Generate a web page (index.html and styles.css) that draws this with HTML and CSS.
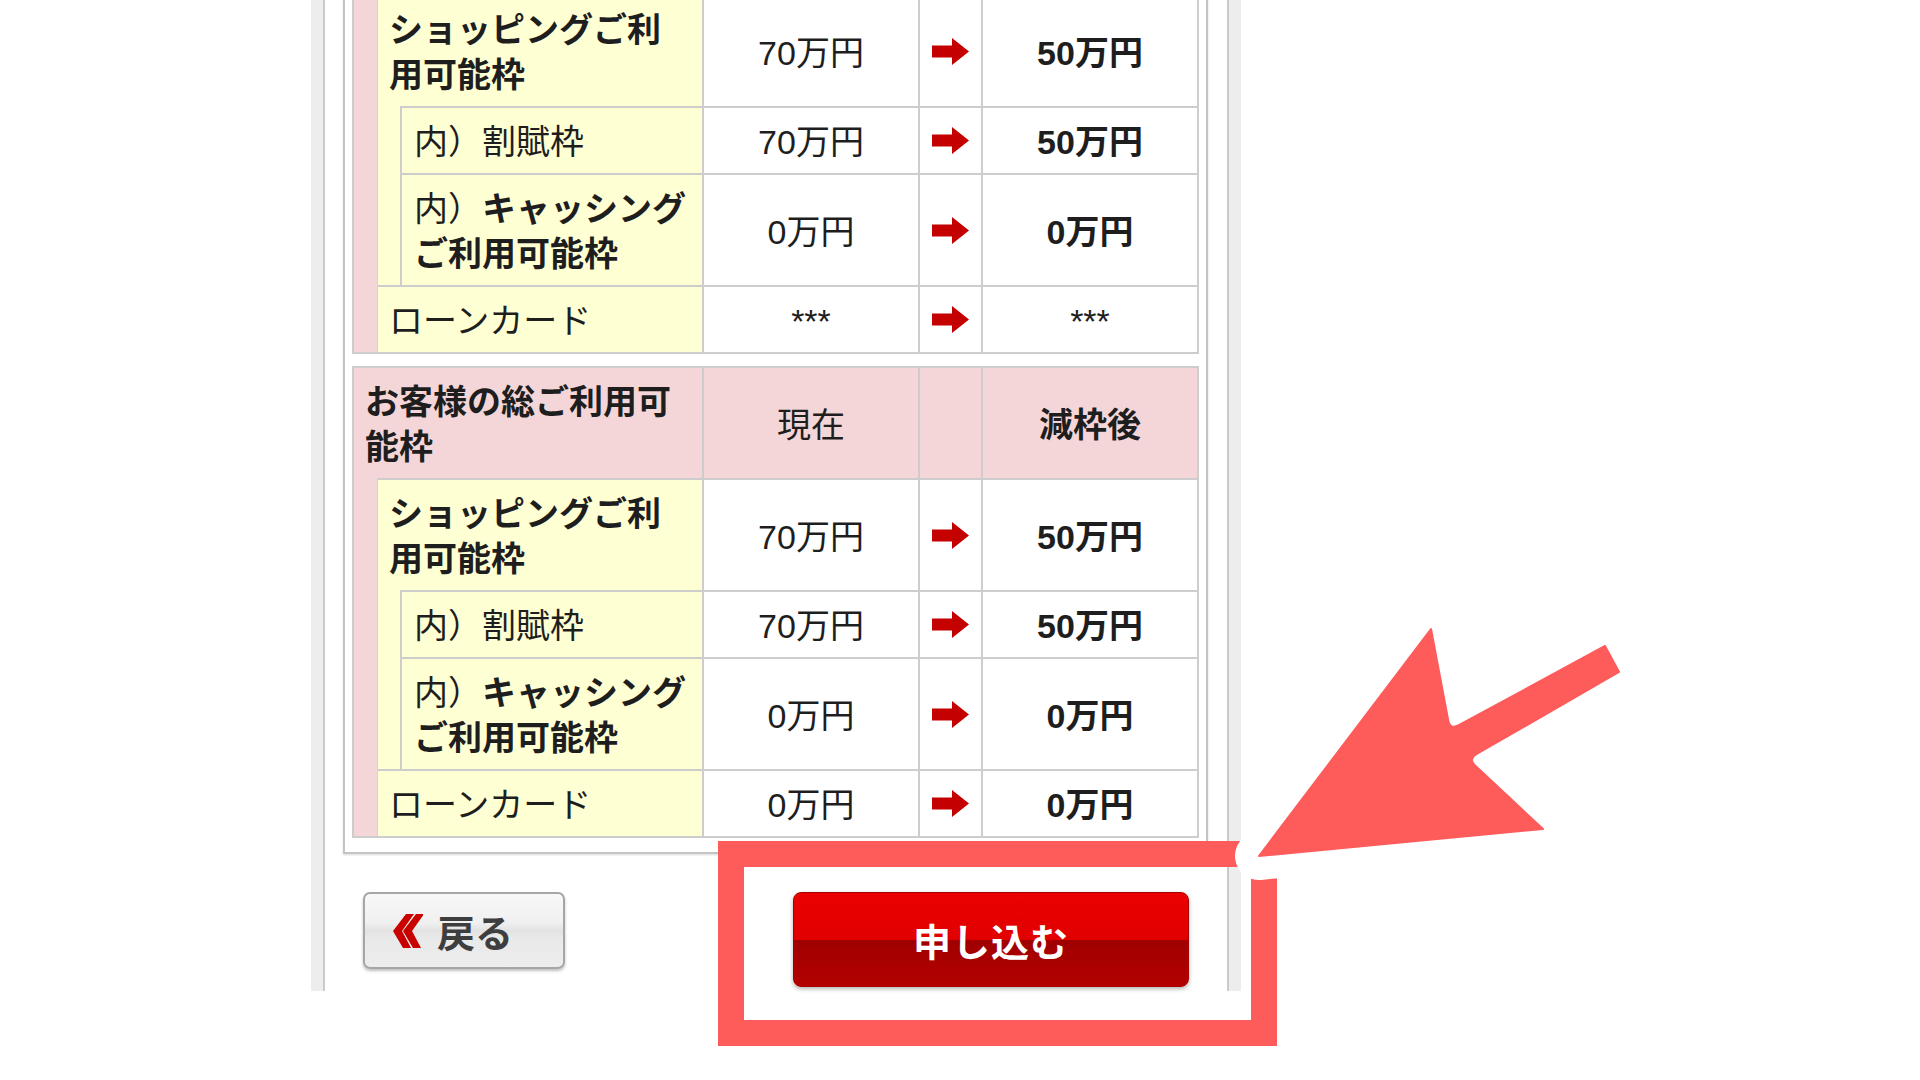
FILE: index.html
```html
<!DOCTYPE html>
<html lang="ja">
<head>
<meta charset="utf-8">
<title>減枠のお申し込み</title>
<link rel="stylesheet" href="styles.css">
</head>
<body>
<div class="frame">
  <div class="box">
    <div class="limits">
      <div class="c hd-label">カードのご利用可能枠</div>
      <div class="c hd">現在</div>
      <div class="c hd"></div>
      <div class="c hd strong last">減枠後</div>

      <div class="band"></div>
      <div class="indent"></div>

      <div class="c lbl wide strong">ショッピングご利用可能枠</div>
      <div class="c val">70万円</div>
      <div class="c arr"><svg class="ra" viewBox="0 0 37 27" width="37" height="27"><path d="M0 7.5H20V0L37 13.5L20 27V19.5H0Z"/></svg></div>
      <div class="c val strong last">50万円</div>

      <div class="c lbl">内）割賦枠</div>
      <div class="c val">70万円</div>
      <div class="c arr"><svg class="ra" viewBox="0 0 37 27" width="37" height="27"><path d="M0 7.5H20V0L37 13.5L20 27V19.5H0Z"/></svg></div>
      <div class="c val strong last">50万円</div>

      <div class="c lbl"><p>内）<b>キャッシング</b><br><b>ご利用可能枠</b></p></div>
      <div class="c val">0万円</div>
      <div class="c arr"><svg class="ra" viewBox="0 0 37 27" width="37" height="27"><path d="M0 7.5H20V0L37 13.5L20 27V19.5H0Z"/></svg></div>
      <div class="c val strong last">0万円</div>

      <div class="c lbl wide">ローンカード</div>
      <div class="c val">***</div>
      <div class="c arr"><svg class="ra" viewBox="0 0 37 27" width="37" height="27"><path d="M0 7.5H20V0L37 13.5L20 27V19.5H0Z"/></svg></div>
      <div class="c val last">***</div>
    </div>

    <div class="limits">
      <div class="c hd-label">お客様の総ご利用可能枠</div>
      <div class="c hd">現在</div>
      <div class="c hd"></div>
      <div class="c hd strong last">減枠後</div>

      <div class="band"></div>
      <div class="indent"></div>

      <div class="c lbl wide strong">ショッピングご利用可能枠</div>
      <div class="c val">70万円</div>
      <div class="c arr"><svg class="ra" viewBox="0 0 37 27" width="37" height="27"><path d="M0 7.5H20V0L37 13.5L20 27V19.5H0Z"/></svg></div>
      <div class="c val strong last">50万円</div>

      <div class="c lbl">内）割賦枠</div>
      <div class="c val">70万円</div>
      <div class="c arr"><svg class="ra" viewBox="0 0 37 27" width="37" height="27"><path d="M0 7.5H20V0L37 13.5L20 27V19.5H0Z"/></svg></div>
      <div class="c val strong last">50万円</div>

      <div class="c lbl"><p>内）<b>キャッシング</b><br><b>ご利用可能枠</b></p></div>
      <div class="c val">0万円</div>
      <div class="c arr"><svg class="ra" viewBox="0 0 37 27" width="37" height="27"><path d="M0 7.5H20V0L37 13.5L20 27V19.5H0Z"/></svg></div>
      <div class="c val strong last">0万円</div>

      <div class="c lbl wide">ローンカード</div>
      <div class="c val">0万円</div>
      <div class="c arr"><svg class="ra" viewBox="0 0 37 27" width="37" height="27"><path d="M0 7.5H20V0L37 13.5L20 27V19.5H0Z"/></svg></div>
      <div class="c val strong last">0万円</div>
    </div>
  </div>

  <div class="actions">
    <button class="btn-back" type="button">
      <svg class="chev" viewBox="0 0 30 34" width="30" height="34">
        <path d="M13 0H21L9 17L18 34H10L0 17Z"/>
        <path d="M23 0H31L19 17L28 34H20L10 17Z"/>
      </svg>
      <span>戻る</span>
    </button>
    <button class="btn-apply" type="button">申し込む</button>
  </div>
</div>

<svg class="annot" width="1920" height="1080" viewBox="0 0 1920 1080">
  <rect x="731" y="854" width="533" height="179" fill="none" stroke="#fe5b5b" stroke-width="26"/>
  <path d="M1259 856 L1431 629 L1448.2 720.2 Q1450 730 1458.8 725.2 L1605 646 L1619 672 L1476.7 754 Q1468 759 1475.3 765.8 L1543 829 Z" fill="#fff" stroke="#fff" stroke-width="48" stroke-linejoin="round"/>
  <path d="M1259 856 L1431 629 L1448.2 720.2 Q1450 730 1458.8 725.2 L1605 646 L1619 672 L1476.7 754 Q1468 759 1475.3 765.8 L1543 829 Z" fill="#fe5b5b" stroke="#fe5b5b" stroke-width="2" stroke-linejoin="round"/>
</svg>
</body>
</html>
```

FILE: styles.css
```css
* { box-sizing: border-box; }

html, body {
  margin: 0;
  padding: 0;
  background: #fff;
}

body {
  width: 1920px;
  height: 1080px;
  overflow: hidden;
  font-family: "Noto Sans CJK JP", "Noto Sans", sans-serif;
  color: #1e1e1e;
}

.frame {
  width: 906px;
  margin: -127px 0 0 323px;
  border-left: 2px solid #cacaca;
  border-right: 2px solid #cacaca;
  box-shadow: -12px 0 0 #ededed, 12px 0 0 #ededed;
  background: #fff;
  padding-bottom: 4px;
}

.box {
  margin: 0 19px 0 18px;
  border: 2px solid #c4c4c4;
  padding: 7px 7px 14px;
  background: #fff;
  box-shadow: 0 1px 2px rgba(0, 0, 0, 0.15);
}

.limits {
  display: grid;
  grid-template-columns: 24px 24px 302px 216px 63px 214px;
  border: 2px solid #cdcdcd;
}

.limits + .limits { margin-top: 12px; }

.c {
  display: flex;
  align-items: center;
  font-size: 34px;
  line-height: 45px;
  padding: 9px 12px 11px;
  border-right: 2px solid #cdcdcd;
}

.c p { margin: 0; }
.c b { font-weight: 700; }

.last { border-right: none; }
.strong { font-weight: 700; }

.hd-label {
  grid-column: span 3;
  background: #f5d6d8;
  font-weight: 700;
  padding-left: 11px;
}

.hd {
  background: #f5d6d8;
  justify-content: center;
}

.band {
  grid-row: 2 / 6;
  grid-column: 1;
  background: #f5d6d8;
  border-right: 1px solid #ddd3c6;
}

.indent {
  grid-row: 3 / 5;
  grid-column: 2;
  background: #ffffd4;
  border-right: 2px solid #cdcdcd;
}

.lbl {
  background: #ffffd4;
  border-top: 2px solid #cdcdcd;
  padding-left: 12px;
}

.lbl.wide {
  grid-column: span 2;
  padding-left: 11px;
}

.val {
  justify-content: center;
  border-top: 2px solid #cdcdcd;
  background: #fff;
  padding-top: 12px;
  padding-bottom: 8px;
  font-family: "Liberation Sans", "Noto Sans CJK JP", sans-serif;
}

.arr {
  justify-content: center;
  border-top: 2px solid #cdcdcd;
  padding: 0;
  background: #fff;
}

.ra { display: block; fill: #c40000; }

.actions {
  display: flex;
  justify-content: space-between;
  align-items: flex-start;
  margin: 38px 19px 0 18px;
  padding: 0 19px 0 20px;
}

.btn-back {
  width: 202px;
  height: 77px;
  display: flex;
  align-items: center;
  gap: 14px;
  padding: 0 0 0 28px;
  border: 2px solid #a6a6a6;
  border-radius: 7px;
  background: linear-gradient(#f8f8f8 0%, #f0f0f0 40%, #e2e2e2 50%, #e9e9e9 60%, #ededed 100%);
  box-shadow: 0 2px 3px rgba(0, 0, 0, 0.25);
  font-family: "Noto Sans CJK JP", "Noto Sans", sans-serif;
  font-size: 38px;
  font-weight: 700;
  line-height: 1;
  color: #3e3e3e;
}

.chev { display: block; fill: #c80000; }

.btn-apply {
  width: 396px;
  height: 95px;
  border: 1px solid #a80000;
  border-radius: 8px;
  background: linear-gradient(#ea0000 0%, #e10000 50%, #a00000 51%, #b40000 100%);
  box-shadow: 0 2px 4px rgba(0, 0, 0, 0.3);
  font-family: "Noto Sans CJK JP", "Noto Sans", sans-serif;
  font-size: 38px;
  font-weight: 700;
  line-height: 1;
  letter-spacing: 1px;
  color: #fff;
  padding: 0;
}

.annot {
  position: absolute;
  left: 0;
  top: 0;
  pointer-events: none;
}
```
